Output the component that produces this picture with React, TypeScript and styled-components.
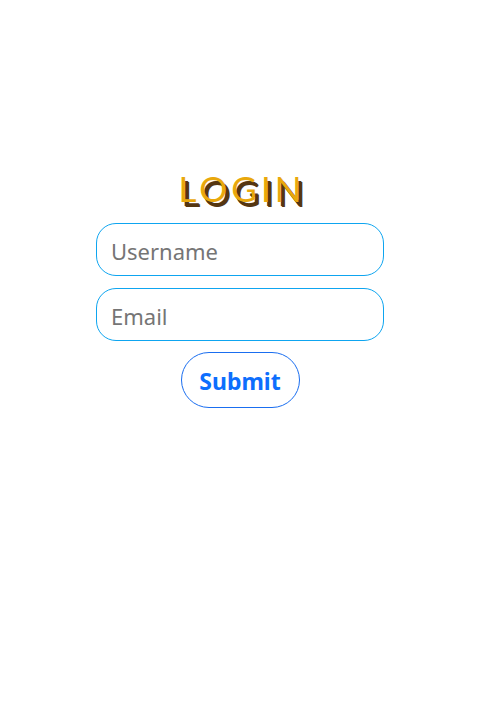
import React from "react";
import styled, { createGlobalStyle } from "styled-components";

const Global = createGlobalStyle`
  html, body { margin: 0; padding: 0; background: #fff; }
  body { font-family: "Noto Sans", "Open Sans", sans-serif; }
  * { box-sizing: border-box; }
`;

const Page = styled.div`
  width: 480px;
  height: 720px;
  display: flex;
  flex-direction: column;
  align-items: center;
  padding-top: 166px;
`;

const Title = styled.h1`
  margin: 0 0 13px;
  font-family: "Lato", "Open Sans", sans-serif;
  font-weight: 400;
  font-size: 35px;
  line-height: 44px;
  letter-spacing: 4px;
  padding-left: 4px;
  color: #e9a80c;
  text-shadow: 4px 5px 0 #553611, 3px 4px 0 #553611;
`;

const Form = styled.form`
  display: flex;
  flex-direction: column;
  align-items: center;
  gap: 12px;
`;

const Field = styled.input`
  width: 288px;
  height: 53px;
  border: 1px solid #0ea5f0;
  border-radius: 20px;
  padding: 2px 14px 0;
  font-family: "Noto Sans", "Open Sans", sans-serif;
  font-size: 22px;
  color: #333;
  outline: none;
  &::placeholder { color: #757575; }
`;

const Button = styled.button`
  width: 119px;
  height: 56px;
  margin-top: -1px;
  border: 1px solid #1a6ef0;
  border-radius: 28px;
  background: #fff;
  color: #0d6efd;
  font-family: "Noto Sans", "Open Sans", sans-serif;
  font-weight: 700;
  font-size: 23px;
  padding: 2px 0 0;
  cursor: pointer;
`;

export default function App() {
  return (
    <>
      <Global />
      <Page>
        <Title>LOGIN</Title>
        <Form onSubmit={(e) => e.preventDefault()}>
          <Field placeholder="Username" />
          <Field placeholder="Email" />
          <Button type="submit">Submit</Button>
        </Form>
      </Page>
    </>
  );
}
